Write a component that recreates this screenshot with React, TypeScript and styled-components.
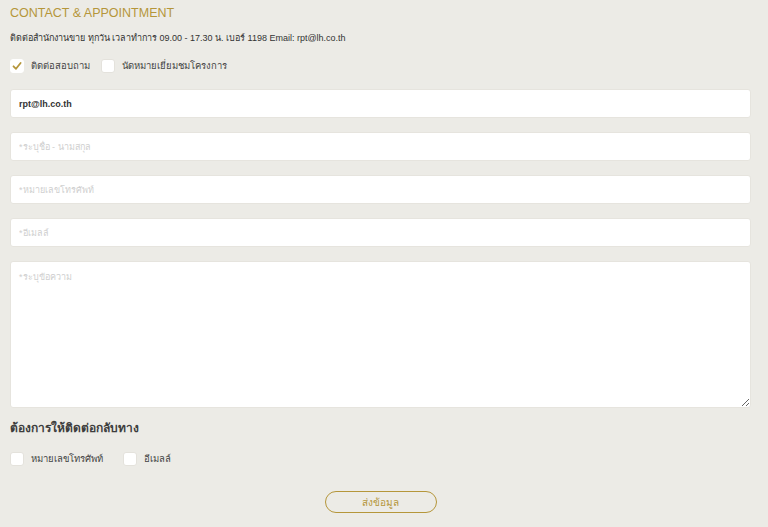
import { FC, useState } from 'react';
import styled, { createGlobalStyle } from 'styled-components';

const GlobalStyle = createGlobalStyle`
	html, body {
		margin: 0;
		padding: 0;
		background: #ecebe6;
	}
	* {
		box-sizing: border-box;
	}
`;

const gold = '#b5963a';

const Page = styled.div`
	width: 768px;
	height: 527px;
	padding: 4px 17px 0 10px;
	background: #ecebe6;
	font-family: 'Liberation Sans', 'Noto Sans', sans-serif;
	color: #3a3a3a;
	overflow: hidden;
`;

const Title = styled.h2`
	margin: 0;
	font-size: 12.5px;
	font-weight: 400;
	line-height: 18px;
	color: ${gold};
`;

const Info = styled.p`
	margin: 9px 0 0;
	font-size: 9px;
	line-height: 14px;
	color: #333;
`;

const CheckRow = styled.div<{ $gap: number; $top: number }>`
	display: flex;
	align-items: center;
	gap: ${(p) => p.$gap}px;
	margin-top: ${(p) => p.$top}px;
`;

const CheckItem = styled.label`
	display: flex;
	align-items: center;
	gap: 7px;
	font-size: 9.5px;
	color: #444;
	cursor: pointer;
`;

const Box = styled.span<{ $checked: boolean }>`
	display: flex;
	align-items: center;
	justify-content: center;
	width: 14px;
	height: 14px;
	background: #fff;
	border: 1px solid ${(p) => (p.$checked ? '#fff' : '#e4e2dc')};
	border-radius: 3px;
`;

const Form = styled.form`
	display: flex;
	flex-direction: column;
	margin-top: 16px;
`;

const Field = styled.input`
	width: 100%;
	height: 29px;
	margin-bottom: 14px;
	padding: 0 8px;
	background: #fff;
	border: 1px solid #e6e4de;
	border-radius: 3px;
	font-family: inherit;
	font-size: 9px;
	font-weight: 700;
	color: #333;
	outline: none;

	&::placeholder {
		color: #cfcfcf;
		font-weight: 400;
	}
`;

const Area = styled.textarea`
	width: 100%;
	height: 147px;
	padding: 8px;
	background: #fff;
	border: 1px solid #e6e4de;
	border-radius: 3px;
	font-family: inherit;
	font-size: 9px;
	color: #333;
	resize: vertical;
	outline: none;

	&::placeholder {
		color: #cfcfcf;
	}
`;

const SubTitle = styled.h3`
	margin: 12px 0 0;
	font-size: 12px;
	font-weight: 700;
	line-height: 16px;
	color: #3d3d3d;
`;

const Actions = styled.div`
	display: flex;
	justify-content: center;
	margin-top: 25px;
`;

const SubmitBtn = styled.button`
	width: 112px;
	height: 22px;
	background: transparent;
	border: 1px solid ${gold};
	border-radius: 11px;
	font-family: inherit;
	font-size: 10px;
	color: ${gold};
	cursor: pointer;
`;

const Check: FC<{ label: string; checked?: boolean; onToggle?: () => void }> = ({ label, checked = false, onToggle }) => (
	<CheckItem onClick={onToggle}>
		<Box $checked={checked}>
			{checked && (
				<svg width="10" height="10" viewBox="0 0 10 10">
					<path d="M1.5 5.3 L4 7.8 L8.6 2" fill="none" stroke={gold} strokeWidth="1.8" strokeLinecap="round" strokeLinejoin="round" />
				</svg>
			)}
		</Box>
		{label}
	</CheckItem>
);

const App: FC = () => {
	const [inquiry, setInquiry] = useState(true);
	const [visit, setVisit] = useState(false);
	const [byPhone, setByPhone] = useState(false);
	const [byMail, setByMail] = useState(false);

	return (
		<>
			<GlobalStyle />
			<Page>
				<Title>CONTACT &amp; APPOINTMENT</Title>
				<Info>ติดต่อสำนักงานขาย ทุกวัน เวลาทำการ 09.00 - 17.30 น. เบอร์ 1198 Email: rpt@lh.co.th</Info>
				<CheckRow $gap={11} $top={13}>
					<Check label="ติดต่อสอบถาม" checked={inquiry} onToggle={() => setInquiry(!inquiry)} />
					<Check label="นัดหมายเยี่ยมชมโครงการ" checked={visit} onToggle={() => setVisit(!visit)} />
				</CheckRow>
				<Form onSubmit={(e) => e.preventDefault()}>
					<Field defaultValue="rpt@lh.co.th" />
					<Field placeholder="*ระบุชื่อ - นามสกุล" />
					<Field placeholder="*หมายเลขโทรศัพท์" />
					<Field placeholder="*อีเมลล์" />
					<Area placeholder="*ระบุข้อความ" />
					<SubTitle>ต้องการให้ติดต่อกลับทาง</SubTitle>
					<CheckRow $gap={20} $top={15}>
						<Check label="หมายเลขโทรศัพท์" checked={byPhone} onToggle={() => setByPhone(!byPhone)} />
						<Check label="อีเมลล์" checked={byMail} onToggle={() => setByMail(!byMail)} />
					</CheckRow>
					<Actions>
						<SubmitBtn type="submit">ส่งข้อมูล</SubmitBtn>
					</Actions>
				</Form>
			</Page>
		</>
	);
};

export default App;
